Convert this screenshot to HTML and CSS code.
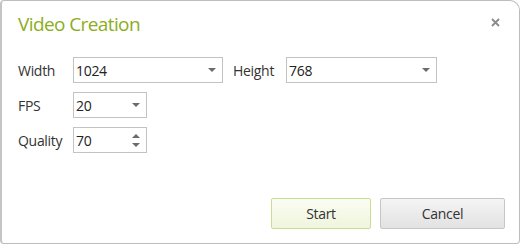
FILE: index.html
```html
<!DOCTYPE html>
<html>
<head>
<meta charset="utf-8">
<link rel="stylesheet" href="styles.css">
</head>
<body>
<div class="dialog">
  <div class="header">
    <div class="title">Video Creation</div>
    <div class="close">
      <svg width="9" height="9" viewBox="0 0 9 9"><path d="M1 1 L8 8 M8 1 L1 8" stroke="#8a8a8a" stroke-width="1.8" fill="none"/></svg>
    </div>
  </div>
  <div class="body">
    <div class="row">
      <div class="label">Width</div>
      <div class="field select w150"><span class="value">1024</span><span class="arrow"></span></div>
      <div class="label2">Height</div>
      <div class="field select w151"><span class="value">768</span><span class="arrow"></span></div>
    </div>
    <div class="row">
      <div class="label">FPS</div>
      <div class="field select w74"><span class="value">20</span><span class="arrow"></span></div>
    </div>
    <div class="row">
      <div class="label">Quality</div>
      <div class="field spin w74"><span class="value">70</span><span class="spinner"><span class="up"></span><span class="down"></span></span></div>
    </div>
  </div>
  <div class="footer">
    <button class="btn start">Start</button>
    <button class="btn cancel">Cancel</button>
  </div>
</div>
</body>
</html>
```

FILE: styles.css
```css
html, body {
  margin: 0;
  padding: 0;
  background: #ffffff;
}
body {
  font-family: "Open Sans", "Noto Sans", "Liberation Sans", sans-serif;
  color: #333333;
}
.dialog {
  width: 520px;
  height: 244px;
  box-sizing: border-box;
  border: 1px solid #bdbdbd;
  border-left: 2px solid #c4c4c4;
  border-radius: 4px 10px 4px 4px;
  display: flex;
  flex-direction: column;
  background: #fff;
}
.header {
  display: flex;
  justify-content: space-between;
  align-items: flex-start;
  padding: 11px 19px 0 16px;
}
.title {
  font-size: 19px;
  line-height: 24px;
  color: #8aae1c;
  letter-spacing: -0.6px;
}
.close {
  margin-top: 6px;
  width: 9px;
  height: 9px;
  display: flex;
}
.body {
  display: flex;
  flex-direction: column;
  gap: 9px;
  padding: 21px 0 0 16px;
}
.row {
  display: flex;
  align-items: center;
  height: 26px;
}
.label {
  width: 55px;
  font-size: 14px;
  letter-spacing: -0.3px;
}
.label2 {
  font-size: 14px;
  letter-spacing: -0.3px;
  margin-left: 10px;
  width: 53px;
}
.field {
  height: 26px;
  box-sizing: border-box;
  border: 1px solid #c3c3c3;
  display: flex;
  align-items: center;
  justify-content: space-between;
  padding: 0 6px 0 2px;
  font-size: 14px;
  letter-spacing: -0.3px;
  color: #222;
}
.w150 { width: 150px; }
.w151 { width: 151px; }
.w74 { width: 74px; }
.arrow {
  width: 0;
  height: 0;
  border-left: 4px solid transparent;
  border-right: 4px solid transparent;
  border-top: 4px solid #6b6b6b;
}
.spinner {
  display: flex;
  flex-direction: column;
  gap: 5px;
  margin-right: 0;
}
.up {
  width: 0;
  height: 0;
  border-left: 4px solid transparent;
  border-right: 4px solid transparent;
  border-bottom: 4px solid #6b6b6b;
}
.down {
  width: 0;
  height: 0;
  border-left: 4px solid transparent;
  border-right: 4px solid transparent;
  border-top: 4px solid #6b6b6b;
}
.footer {
  margin-top: auto;
  display: flex;
  justify-content: flex-end;
  gap: 9px;
  padding: 0 14px 14px 0;
}
.btn {
  height: 31px;
  font-family: inherit;
  font-size: 14px;
  letter-spacing: -0.3px;
  color: #333;
  border-radius: 2px;
  padding: 0;
}
.start {
  width: 100px;
  border: 1px solid #c8dd95;
  background: linear-gradient(#fbfdf3, #eff5dd);
}
.cancel {
  width: 125px;
  border: 1px solid #c6c6c6;
  background: linear-gradient(#f4f4f4, #e2e2e2);
}
```
